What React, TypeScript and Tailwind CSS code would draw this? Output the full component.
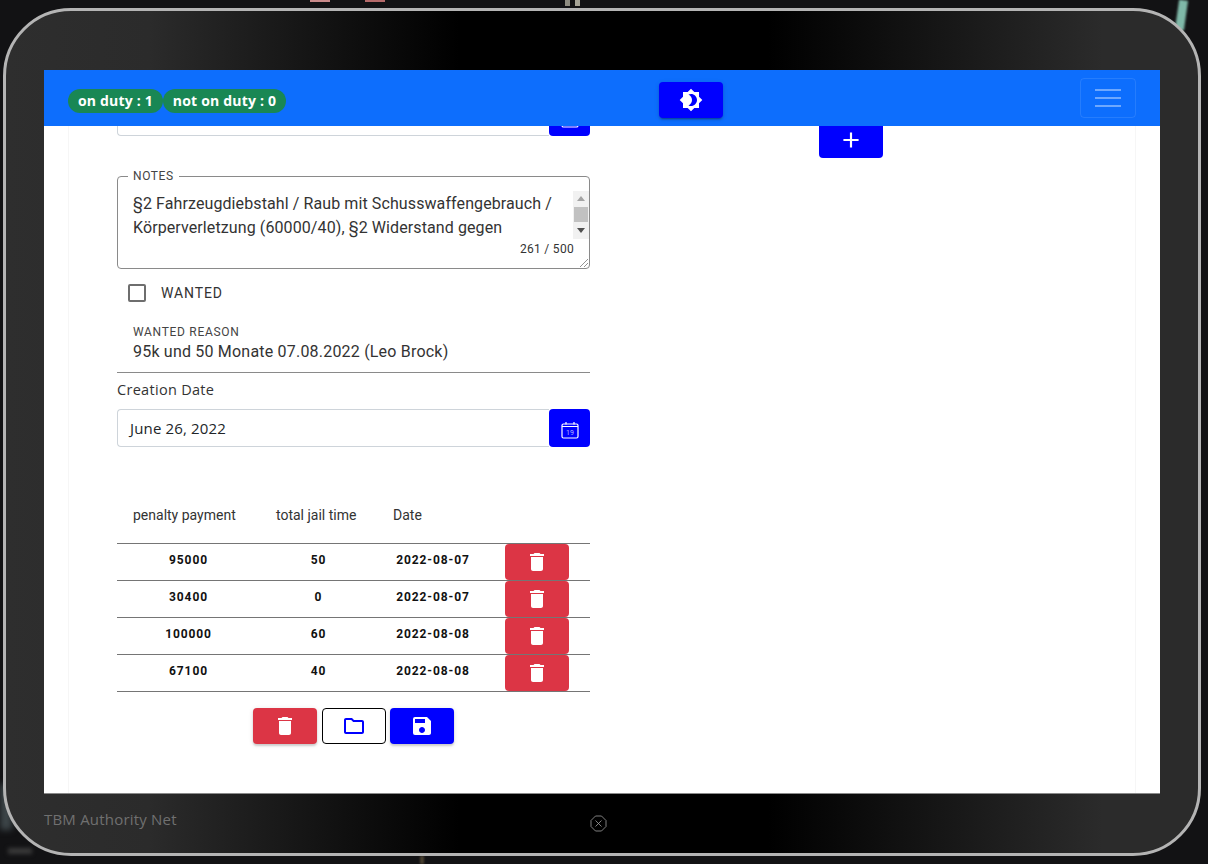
import React from 'react';
import { MdAdd, MdBrightness4, MdDelete, MdOutlineFolder, MdSave } from 'react-icons/md';

const rows = [
    { payment: '95000', jail: '50', date: '2022-08-07' },
    { payment: '30400', jail: '0', date: '2022-08-07' },
    { payment: '100000', jail: '60', date: '2022-08-08' },
    { payment: '67100', jail: '40', date: '2022-08-08' },
];

const CalendarGlyph: React.FC<{ day?: string }> = ({ day }) => (
    <svg className="mt-[3px]" width="18" height="18" viewBox="0 0 18 18" fill="none" stroke="white">
        <rect x="1" y="3" width="16" height="14" rx="1.5" strokeWidth="1.2" />
        <path d="M1 5.5h16M5 1v2.5M13 1v2.5" strokeWidth="1.2" />
        {day && <text x="9" y="14" fontSize="7" fill="#b3b3ff" stroke="none" textAnchor="middle" fontFamily="Roboto, sans-serif">{day}</text>}
    </svg>
);

const DateInput: React.FC<{ value?: string; className?: string }> = ({ value, className }) => (
    <div className={`flex h-[38px] w-[473px] ${className ?? ''}`}>
        <div className="flex-1 rounded-l-[4px] border border-r-0 border-[#ced4da] bg-white pl-[12px] font-['Open_Sans',sans-serif] text-[15px] leading-[36px] tracking-[0.15px] text-[#212529]">
            {value}
        </div>
        <div className="flex w-[41px] items-center justify-center rounded-[4px] bg-[#0000ff]">
            <CalendarGlyph day={value ? '19' : undefined} />
        </div>
    </div>
);

export default function App() {
    return (
        <div className="relative h-[864px] w-[1208px] overflow-hidden bg-[#121214] pl-[3px] pt-[8px]">
            {/* bits of the wallpaper behind the frame */}
            <div className="absolute left-[310px] top-0 h-[2px] w-[20px] bg-[#c98a8a]" />
            <div className="absolute left-[365px] top-0 h-[2px] w-[20px] bg-[#b56a6a]" />
            <div className="absolute left-[565px] top-0 h-[6px] w-[5px] bg-[#8d8b80]" />
            <div className="absolute left-[575px] top-0 h-[6px] w-[5px] bg-[#a5a396]" />
            <div className="absolute left-[1177px] top-0 h-[30px] w-[9px] rotate-[8deg] bg-[#7fb8a8] blur-[1px]" />
            <div className="absolute bottom-[34px] left-0 h-[46px] w-[12px] bg-[#3d4649] blur-[3px]" />
            <div className="absolute bottom-[10px] left-[8px] h-[6px] w-[24px] bg-[#3a3a3a] blur-[2px]" />
            <div className="absolute bottom-0 left-[420px] h-[8px] w-[4px] bg-[#4a4030] blur-[1px]" />

            {/* Tablet frame */}
            <div className="relative h-[848px] w-[1198px] rounded-[68px] border-[3px] border-[#b4b4b4] bg-[linear-gradient(90deg,#2e2e2e_0%,#2b2b2b_12%,#000_38%,#000_64%,#2b2b2b_92%)] pl-[38px] pt-[59px]">
                {/* Screen */}
                <div className="flex h-[724px] w-[1116px] flex-col border-b border-[#8a8a8a] bg-white">
                    <nav className="relative z-10 flex h-[56px] shrink-0 bg-[#0d6efd] pl-[24px]">
                        <div className="mt-[19px] flex h-[24px] font-['Open_Sans',sans-serif] text-[14px] leading-[24px] font-bold tracking-[0.2px] text-white">
                            <span className="w-[95px] rounded-full bg-[#198754] text-center">on duty : 1</span>
                            <span className="w-[123px] rounded-full bg-[#198754] text-center">not on duty : 0</span>
                        </div>
                        <button className="ml-[373px] mt-[12px] flex h-[36px] w-[64px] items-center justify-center rounded-[4px] bg-[#0000ff] text-white shadow-[0_3px_1px_-2px_rgba(0,0,0,0.2),0_2px_2px_0_rgba(0,0,0,0.14),0_1px_5px_0_rgba(0,0,0,0.12)]">
                            <MdBrightness4 size={24} />
                        </button>
                        <button className="ml-auto mr-[24px] mt-[8px] flex h-[40px] w-[56px] flex-col items-center justify-center gap-[6px] rounded-[4px] border border-white/10">
                            <span className="h-[2px] w-[26px] bg-[#6ea8fe]" />
                            <span className="h-[2px] w-[26px] bg-[#6ea8fe]" />
                            <span className="h-[2px] w-[26px] bg-[#6ea8fe]" />
                        </button>
                    </nav>

                    <div className="min-h-0 flex-1 overflow-hidden">
                        <div className="mx-[24px] flex h-full w-[1068px] border-x border-[#f6f6f6] pl-[48px]">
                            {/* Record form */}
                            <div className="w-[473px] shrink-0 font-['Roboto',sans-serif]">
                                <DateInput className="-mt-[28px]" />

                                <fieldset className="relative mt-[33px] h-[100px] rounded-[4px] border border-[#8a8a8a] px-[15px]">
                                    <legend className="-ml-[5px] px-[5px] text-[12px] leading-[14px] tracking-[0.6px] text-[#444]">NOTES</legend>
                                    <p className="mt-[9px] w-[430px] text-[16px] leading-[24px] tracking-[0.1px] text-[#333]">
                                        §2 Fahrzeugdiebstahl / Raub mit Schusswaffengebrauch / Körperverletzung (60000/40), §2 Widerstand gegen
                                    </p>
                                    <div className="absolute right-0 top-[8px] flex h-[48px] w-[16px] flex-col items-center bg-[#f1f1f1]">
                                        <span className="mt-[5px] h-0 w-0 border-x-[4px] border-b-[5px] border-x-transparent border-b-[#a3a3a3]" />
                                        <span className="mt-[6px] h-[15px] w-[14px] bg-[#c1c1c1]" />
                                        <span className="mt-[6px] h-0 w-0 border-x-[4px] border-t-[5px] border-x-transparent border-t-[#505050]" />
                                    </div>
                                    <span className="absolute right-[15px] top-[58px] text-[12px] leading-[16px] tracking-[0.3px] text-[#333]">261 / 500</span>
                                    <svg className="absolute bottom-[1px] right-[1px]" width="9" height="9" viewBox="0 0 9 9" stroke="#777" strokeWidth="0.8">
                                        <path d="M1 9L9 1M5 9L9 5" />
                                    </svg>
                                </fieldset>

                                <label className="mt-[15px] flex h-[18px] items-center pl-[11px]">
                                    <span className="h-[18px] w-[18px] rounded-[2px] border-2 border-[#6e6e6e]" />
                                    <span className="ml-[15px] text-[14px] tracking-[0.9px] text-[#333]">WANTED</span>
                                </label>

                                <div className="mt-[23px] h-[48px] border-b border-[#8a8a8a] px-[16px]">
                                    <div className="text-[12px] leading-[14px] tracking-[0.7px] text-[#444]">WANTED REASON</div>
                                    <div className="mt-[1px] text-[16px] leading-[24px] tracking-[0.2px] text-[#333]">95k und 50 Monate 07.08.2022 (Leo Brock)</div>
                                </div>

                                <div className="mt-[6px] h-[22px] font-['Open_Sans',sans-serif] text-[14.5px] leading-[22px] tracking-[0.3px] text-[#333]">Creation Date</div>
                                <DateInput value="June 26, 2022" className="mt-[8px]" />

                                {/* Penalties */}
                                <table className="mt-[40px] w-[473px] table-fixed border-collapse">
                                    <colgroup>
                                        <col className="w-[143px]" />
                                        <col className="w-[117px]" />
                                        <col className="w-[112px]" />
                                        <col className="w-[101px]" />
                                    </colgroup>
                                    <thead>
                                        <tr className="h-[56px] border-b border-[#757575] text-left text-[14px] font-normal text-[#333]">
                                            <th className="pl-[16px] pt-[2px] font-normal">penalty payment</th>
                                            <th className="pl-[16px] pt-[2px] font-normal">total jail time</th>
                                            <th className="pl-[16px] pt-[2px] font-normal">Date</th>
                                            <th />
                                        </tr>
                                    </thead>
                                    <tbody>
                                        {rows.map((row, i) => (
                                            <tr key={i} className="h-[37px] border-b border-[#757575] text-center text-[12px] font-bold tracking-[0.9px] text-[#111]">
                                                <td className="pb-[3px]">{row.payment}</td>
                                                <td className="pb-[3px]">{row.jail}</td>
                                                <td className="pb-[3px]">{row.date}</td>
                                                <td className="pl-[16px] align-top">
                                                    <button className="flex h-[36px] w-[64px] items-center justify-center rounded-[4px] bg-[#dc3545] text-white">
                                                        <MdDelete size={24} />
                                                    </button>
                                                </td>
                                            </tr>
                                        ))}
                                    </tbody>
                                </table>

                                <div className="mt-[16px] flex pl-[136px]">
                                    <button className="flex h-[36px] w-[64px] items-center justify-center rounded-[4px] bg-[#dc3545] text-white shadow-[0_2px_2px_0_rgba(0,0,0,0.14),0_1px_5px_0_rgba(0,0,0,0.12)]">
                                        <MdDelete size={24} />
                                    </button>
                                    <button className="ml-[5px] flex h-[36px] w-[64px] items-center justify-center rounded-[4px] border border-black bg-white text-[#0000ff]">
                                        <MdOutlineFolder size={24} />
                                    </button>
                                    <button className="ml-[4px] flex h-[36px] w-[64px] items-center justify-center rounded-[4px] bg-[#0000ff] text-white shadow-[0_2px_2px_0_rgba(0,0,0,0.14),0_1px_5px_0_rgba(0,0,0,0.12)]">
                                        <MdSave size={24} />
                                    </button>
                                </div>
                            </div>

                            <div className="flex w-[522px] justify-center">
                                <button className="-mt-[4px] flex h-[36px] w-[64px] items-center justify-center rounded-[4px] bg-[#0000ff] text-white">
                                    <MdAdd size={26} />
                                </button>
                            </div>
                        </div>
                    </div>
                </div>

                {/* Footer */}
                <div className="flex">
                    <span className="mt-[15px] w-[546px] font-['Open_Sans',sans-serif] text-[15px] leading-[20px] tracking-[0.2px] text-[#707070]">TBM Authority Net</span>
                    <svg className="mt-[21px]" width="17" height="17" viewBox="0 0 17 17" fill="none" stroke="#a0a0a0" strokeWidth="0.8">
                        <path d="M5.5 1h6L16 5.5v6L11.5 16h-6L1 11.5v-6zM5.5 5.5l6 6M11.5 5.5l-6 6" />
                    </svg>
                </div>
            </div>
        </div>
    );
}
